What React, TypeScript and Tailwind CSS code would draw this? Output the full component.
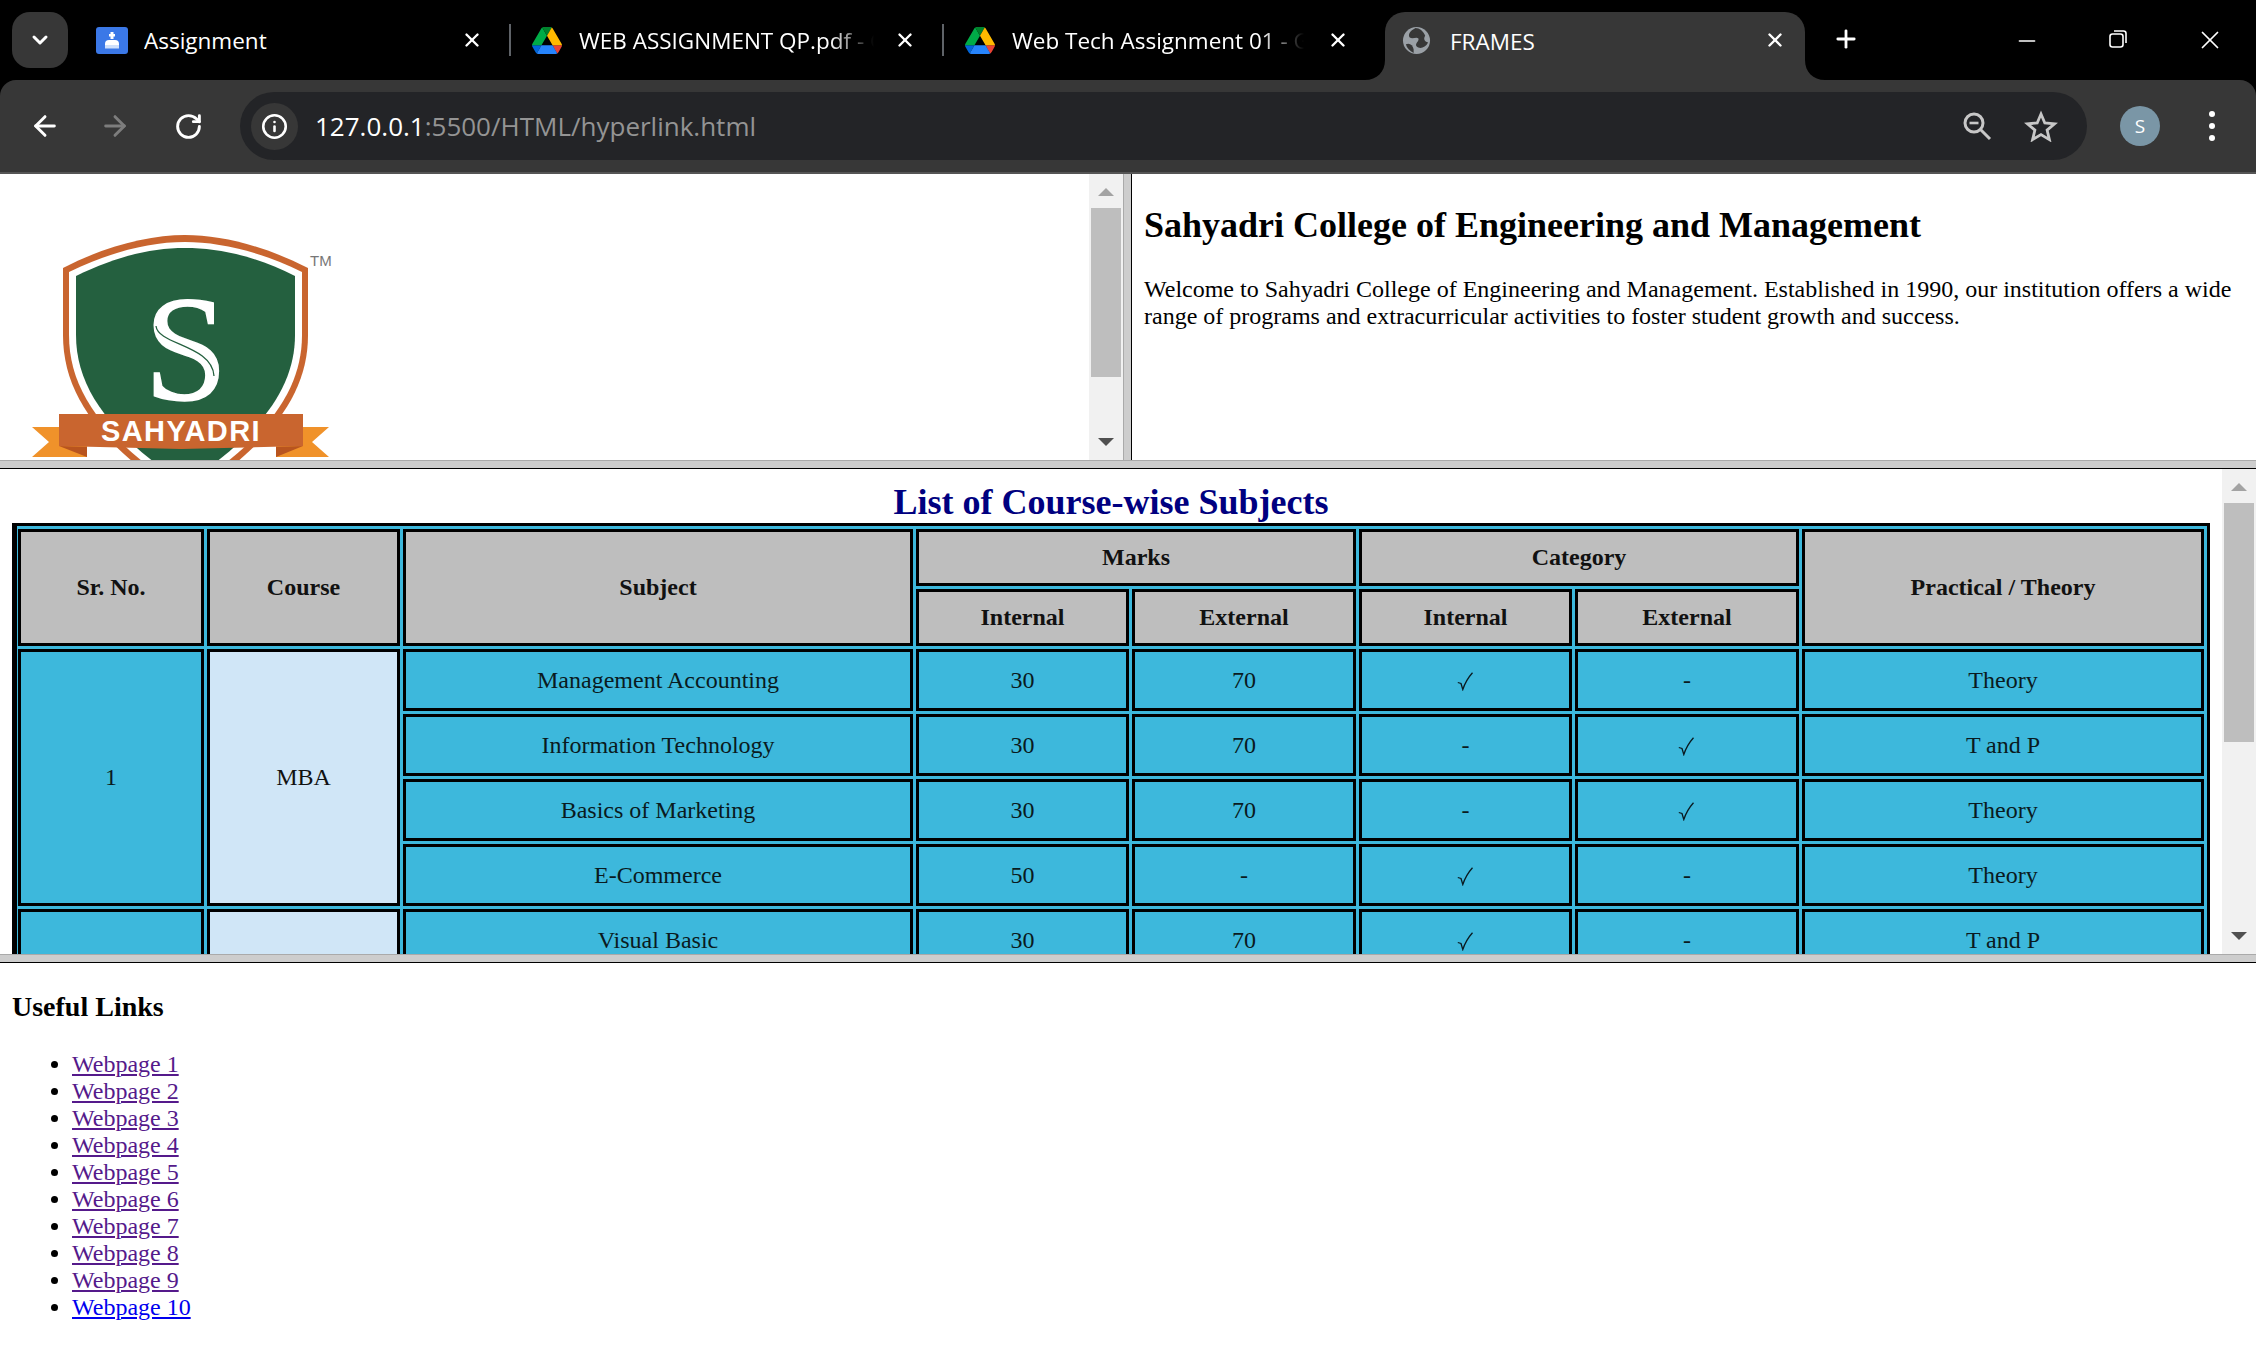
import React from "react";
import { ArrowLeft, ArrowRight, RotateCw, Info, X, Plus, Minus, ChevronDown } from "lucide-react";

function Drive() {
  return (
    <svg viewBox="0 0 87.3 78" className="w-[30px] h-[27px] shrink-0">
      <path d="m6.6 66.85 3.85 6.65c.8 1.4 1.95 2.5 3.3 3.3l13.75-23.8h-27.5c0 1.55.4 3.1 1.2 4.5z" fill="#0066da" />
      <path d="m43.65 25-13.75-23.8c-1.35.8-2.5 1.9-3.3 3.3l-25.4 44a9.06 9.06 0 0 0 -1.2 4.5h27.5z" fill="#00ac47" />
      <path d="m73.55 76.8c1.35-.8 2.5-1.9 3.3-3.3l1.6-2.75 7.65-13.25c.8-1.4 1.2-2.95 1.2-4.5h-27.502l5.852 11.5z" fill="#ea4335" />
      <path d="m43.65 25 13.75-23.8c-1.35-.8-2.9-1.2-4.5-1.2h-18.5c-1.6 0-3.15.45-4.5 1.2z" fill="#00832d" />
      <path d="m59.8 53h-32.3l-13.75 23.8c1.35.8 2.9 1.2 4.5 1.2h50.8c1.6 0 3.15-.45 4.5-1.2z" fill="#2684fc" />
      <path d="m73.4 26.5-12.7-22c-.8-1.4-1.95-2.5-3.3-3.3l-13.75 23.8 16.15 28h27.45c0-1.55-.4-3.1-1.2-4.5z" fill="#ffba00" />
    </svg>
  );
}

function AssignmentIcon() {
  return (
    <svg viewBox="0 0 32 27" className="w-[32px] h-[27px] shrink-0">
      <rect width="32" height="27" rx="3" fill="#3b78e7" />
      <rect x="14.5" y="5" width="3" height="7" fill="#fff" />
      <rect x="13" y="7" width="6" height="2.5" fill="#fff" />
      <path d="M9 17 Q9 13 13 13 H19 Q23 13 23 17 V21 H9Z" fill="#fff" />
      <rect x="9" y="18" width="14" height="3.5" fill="#cfe0fb" />
    </svg>
  );
}

function GlobeIcon() {
  return (
    <svg viewBox="0 0 30 30" className="w-[29px] h-[29px] shrink-0">
      <circle cx="15" cy="15" r="14" fill="#9aa0a6" />
      <path d="M14 2 C8 5 6 9 8 12 C11 14 15 11 17 13 C18 16 13 18 15 21 C18 24 24 23 27 17 C23 16 22 13 24 10 C22 5 18 2 14 2Z" fill="#373737" />
      <path d="M4 19 C8 17 11 20 12 24 C12 26 12 27 12 28 C8 26 5 23 4 19Z" fill="#373737" />
    </svg>
  );
}

function TabClose() {
  return (
    <div className="w-[30px] h-[28px] flex justify-center items-center shrink-0">
      <X size={22} strokeWidth={2.6} color="#fff" />
    </div>
  );
}

function Separator() {
  return <div className="w-[2px] h-[32px] bg-[#5f6368] shrink-0" />;
}

const tabText = "overflow-hidden whitespace-nowrap text-[22.5px] leading-[30px] text-white mt-[2px]";
const fadeText = "[mask-image:linear-gradient(to_right,#000_85%,transparent_100%)]";

function TabBar() {
  return (
    <div className="h-[80px] bg-black flex items-start pt-[12px] pl-[12px] font-['Open_Sans',sans-serif]">
      <div className="w-[56px] h-[56px] rounded-[18px] bg-[#373737] flex items-center justify-center shrink-0">
        <ChevronDown size={24} strokeWidth={3} color="#fff" />
      </div>
      <div className="h-[56px] w-[443px] pl-[28px] flex items-center shrink-0">
        <AssignmentIcon />
        <div className={tabText + " w-[313px] ml-[16px]"}>Assignment</div>
        <TabClose />
        <div className="w-[22px] shrink-0" />
        <Separator />
      </div>
      <div className="h-[56px] w-[433px] pl-[21px] flex items-center shrink-0">
        <Drive />
        <div className={tabText + " w-[295px] ml-[17px] " + fadeText}>WEB ASSIGNMENT QP.pdf - Google Drive</div>
        <div className="w-[16px] shrink-0" />
        <TabClose />
        <div className="w-[22px] shrink-0" />
        <Separator />
      </div>
      <div className="h-[56px] w-[441px] pl-[21px] flex items-center shrink-0">
        <Drive />
        <div className={tabText + " w-[292px] ml-[17px] " + fadeText}>Web Tech Assignment 01 - Google Drive</div>
        <div className="w-[19px] shrink-0" />
        <TabClose />
      </div>
      <div className="relative w-[420px] h-[68px] bg-[#373737] rounded-t-[20px] flex items-start pt-[14px] pl-[17px] shrink-0">
        <svg viewBox="0 0 20 20" className="absolute left-[-20px] bottom-0 w-[20px] h-[20px]"><path d="M20 0V20H0C12 20 20 12 20 0Z" fill="#373737" /></svg>
        <svg viewBox="0 0 20 20" className="absolute right-[-20px] bottom-0 w-[20px] h-[20px]"><path d="M0 0V20H20C8 20 0 12 0 0Z" fill="#373737" /></svg>
        <GlobeIcon />
        <div className="ml-[19px] w-[310px] text-[22.5px] text-white leading-[30px] mt-[1px]">FRAMES</div>
        <TabClose />
      </div>
      <div className="ml-[26px] mt-[13px] w-[30px] flex justify-center"><Plus size={28} strokeWidth={2.4} color="#fff" /></div>
      <div className="ml-[151px] mt-[16px] w-[30px] flex justify-center"><Minus size={26} strokeWidth={1.5} color="#fff" /></div>
      <div className="ml-[61px] mt-[16px] w-[30px] flex justify-center">
        <svg viewBox="0 0 22 22" className="w-[22px] h-[22px]" fill="none" stroke="#fff" strokeWidth="1.6">
          <rect x="3" y="6" width="13" height="13" rx="2.5" />
          <path d="M7 3H16.5Q19 3 19 5.5V15" />
        </svg>
      </div>
      <div className="ml-[62px] mt-[12px] w-[30px] flex justify-center"><X size={32} strokeWidth={1.4} color="#fff" /></div>
    </div>
  );
}

function ZoomGlyph() {
  return (
    <svg viewBox="0 0 30 30" className="w-[30px] h-[30px]" fill="none" stroke="#c7c7c7" strokeWidth="3">
      <circle cx="12" cy="12" r="9" />
      <path d="M18.5 18.5 L28 28" />
      <path d="M7.5 12 H16.5" strokeWidth="2.6" />
    </svg>
  );
}

function StarGlyph() {
  return (
    <svg viewBox="0 0 34 32" className="w-[34px] h-[32px]" fill="none" stroke="#c7c7c7" strokeWidth="2.8" strokeLinejoin="miter">
      <path d="M17 4 L20.8 13 L30.5 13.8 L23.1 20.1 L25.4 29.6 L17 24.6 L8.6 29.6 L10.9 20.1 L3.5 13.8 L13.2 13Z" />
    </svg>
  );
}

function Toolbar() {
  return (
    <div className="h-[92px] bg-[#373737] rounded-t-[16px] flex items-center font-['Open_Sans',sans-serif]">
      <div className="ml-[29px] w-[32px] flex justify-center"><ArrowLeft size={32} strokeWidth={2.2} color="#fff" /></div>
      <div className="ml-[38px] w-[32px] flex justify-center"><ArrowRight size={32} strokeWidth={2.2} color="#7d7d7d" /></div>
      <div className="ml-[41px] w-[32px] flex justify-center"><RotateCw size={29} strokeWidth={2.4} color="#fff" /></div>
      <div className="ml-[36px] w-[1847px] shrink-0 h-[68px] bg-[#232427] rounded-full flex items-center pl-[11px]">
        <div className="w-[47px] h-[47px] rounded-full bg-[#373737] flex items-center justify-center"><Info size={27} strokeWidth={2.3} color="#fff" /></div>
        <div className="ml-[17px] text-[26px] whitespace-nowrap text-white">127.0.0.1<span className="text-[#949494]">:5500/HTML/hyperlink.html</span></div>
        <div className="ml-auto flex items-center pr-[29px]">
          <ZoomGlyph />
          <div className="ml-[32px]"><StarGlyph /></div>
        </div>
      </div>
      <div className="ml-[33px] w-[40px] h-[40px] rounded-full bg-[#7a96a6] text-white text-[19px] flex items-center justify-center">S</div>
      <div className="ml-[37px] w-[30px] flex flex-col items-center gap-[6px]">
        <div className="w-[6px] h-[6px] rounded-full bg-white" />
        <div className="w-[6px] h-[6px] rounded-full bg-white" />
        <div className="w-[6px] h-[6px] rounded-full bg-white" />
      </div>
    </div>
  );
}

function Scrollbar({ thumb }: { thumb: string }) {
  return (
    <div className="w-[34px] shrink-0 h-full bg-[#f1f1f1] flex flex-col items-center">
      <div className="mt-[14px] w-0 h-0 border-x-[8px] border-x-transparent border-b-[8px] border-b-[#a3a3a3]" />
      <div className={"mt-[12px] w-[30px] bg-[#bebebe] " + thumb} />
      <div className="mt-auto mb-[14px] w-0 h-0 border-x-[8px] border-x-transparent border-t-[8px] border-t-[#505050]" />
    </div>
  );
}

function Logo() {
  const shield = "M63 268 C105 246 150 235 185 235 C222 235 265 246 308 268 L308 335 C308 395 270 445 185 500 C100 445 63 395 63 335Z";
  return (
    <svg viewBox="0 174 350 286" className="w-[350px] h-[286px] shrink-0">
      <path d={shield} fill="#c9652f" />
      <path d="M69 272 C110 252 150 242 185 242 C220 242 262 252 302 272 L302 335 C302 392 265 440 185 492 C105 440 69 392 69 335Z" fill="#fff" />
      <path d="M76 276 C115 257 150 248 185 248 C220 248 258 257 295 276 L295 335 C295 388 260 435 185 484 C110 435 76 388 76 335Z" fill="#24603f" />
      <text x="186" y="400" textAnchor="middle" fill="#fff" stroke="#fff" strokeWidth="1.5" fontSize="150" fontFamily="Liberation Serif, serif">S</text>
      <path d="M156 326 C158 345 212 345 214 376" fill="none" stroke="#24603f" strokeWidth="1.3" />
      <path d="M32 427 H87 V457 H32 L49 442Z" fill="#f0922a" />
      <path d="M329 427 H276 V457 H329 L312 442Z" fill="#f0922a" />
      <path d="M59 414 H303 V446 L181 449 L59 446Z" fill="#c9652f" />
      <path d="M59 446 L87 457 V447Z" fill="#b8541f" />
      <path d="M303 446 L276 457 V447Z" fill="#b8541f" />
      <text x="181" y="441" textAnchor="middle" fill="#fff" fontSize="29" fontWeight="700" fontFamily="Liberation Sans, sans-serif" letterSpacing="1.4">SAHYADRI</text>
      <text x="310" y="266" fill="#777" fontSize="15" fontFamily="Liberation Sans, sans-serif">TM</text>
    </svg>
  );
}

const thClass = "border-[3px] border-black bg-[#bebebe] font-bold text-[#111] text-center align-middle p-0";
const tdClass = "border-[3px] border-black bg-[#3db8dc] text-[#0a1a20] text-center align-middle p-0";
const courseClass = "border-[3px] border-black bg-[#d0e6f7] text-[#111] text-center align-middle p-0";

const rows = [
  ["Management Accounting", "30", "70", "✓", "-", "Theory"],
  ["Information Technology", "30", "70", "-", "✓", "T and P"],
  ["Basics of Marketing", "30", "70", "-", "✓", "Theory"],
  ["E-Commerce", "50", "-", "✓", "-", "Theory"],
  ["Visual Basic", "30", "70", "✓", "-", "T and P"],
];

function Mark({ v }: { v: string }) {
  if (v === "✓") {
    return (
      <span role="img" aria-label="✓" className="inline-block align-middle mr-[2px]">
        <svg viewBox="0 0 16 19" className="w-[16px] h-[19px]" fill="none" stroke="#0a1a20">
          <path d="M0.8 10.5 L4 11.5 L5.8 17.5 Q9 8 15.5 0.8" strokeWidth="1.3" />
        </svg>
      </span>
    );
  }
  return <>{v}</>;
}

function CourseTable() {
  return (
    <table className="w-[2198px] table-fixed border-separate border-spacing-[3px] border-[3px] border-black bg-[#3db8dc] shadow-[inset_2px_0_0_#000] text-[24px] leading-[27px]">
      <colgroup>
        <col className="w-[186px]" />
        <col className="w-[193px]" />
        <col className="w-[510px]" />
        <col className="w-[213px]" />
        <col className="w-[224px]" />
        <col className="w-[213px]" />
        <col className="w-[224px]" />
        <col className="w-[402px]" />
      </colgroup>
      <thead>
        <tr className="h-[57px]">
          <th rowSpan={2} className={thClass}>Sr. No.</th>
          <th rowSpan={2} className={thClass}>Course</th>
          <th rowSpan={2} className={thClass}>Subject</th>
          <th colSpan={2} className={thClass}>Marks</th>
          <th colSpan={2} className={thClass}>Category</th>
          <th rowSpan={2} className={thClass}>Practical / Theory</th>
        </tr>
        <tr className="h-[57px]">
          <th className={thClass}>Internal</th>
          <th className={thClass}>External</th>
          <th className={thClass}>Internal</th>
          <th className={thClass}>External</th>
        </tr>
      </thead>
      <tbody>
        {rows.map((r, i) => (
          <tr key={r[0]} className="h-[62px]">
            {i === 0 && <td rowSpan={4} className={tdClass}>1</td>}
            {i === 0 && <td rowSpan={4} className={courseClass}>MBA</td>}
            {i === 4 && <td className={tdClass}></td>}
            {i === 4 && <td className={courseClass}></td>}
            {r.map((c, j) => (
              <td key={j} className={tdClass}><Mark v={c} /></td>
            ))}
          </tr>
        ))}
      </tbody>
    </table>
  );
}

const links = ["Webpage 1", "Webpage 2", "Webpage 3", "Webpage 4", "Webpage 5", "Webpage 6", "Webpage 7", "Webpage 8", "Webpage 9", "Webpage 10"];

export default function App() {
  return (
    <div className="w-[2256px] h-[1364px] overflow-hidden flex flex-col bg-black font-['Liberation_Serif',serif] text-black">
      <TabBar />
      <Toolbar />
      <div className="h-[2px] bg-[#555] shrink-0" />

      {/* top frames */}
      <div className="h-[286px] flex bg-white shrink-0">
        <div className="w-[1123px] flex shrink-0">
          <div className="grow"><Logo /></div>
          <Scrollbar thumb="h-[169px]" />
        </div>
        <div className="w-[8px] bg-[#cdcdcd] border-l border-l-[#aaa] shrink-0" />
        <div className="w-[1px] bg-black shrink-0" />
        <div className="grow px-[12px] pt-[31px]">
          <h2 className="text-[36px] leading-[41px] font-bold">Sahyadri College of Engineering and Management</h2>
          <p className="mt-[30px] text-[24px] leading-[27px] w-[1100px]">
            Welcome to Sahyadri College of Engineering and Management. Established in 1990, our institution offers a wide range of programs and extracurricular activities to foster student growth and success.
          </p>
        </div>
      </div>

      <div className="h-[9px] bg-[#cdcdcd] border-t border-t-[#aaa] border-b border-b-black shrink-0" />

      {/* middle frame */}
      <div className="h-[485px] flex bg-white overflow-hidden shrink-0">
        <div className="w-[2222px] pl-[12px] pt-[13px] overflow-hidden">
          <h2 className="w-[2198px] text-center text-[36px] leading-[41px] font-bold text-[#000080]">List of Course-wise Subjects</h2>
          <CourseTable />
        </div>
        <Scrollbar thumb="h-[239px]" />
      </div>

      <div className="h-[9px] bg-[#cdcdcd] border-t border-t-[#aaa] border-b border-b-black shrink-0" />

      {/* bottom frame */}
      <div className="grow bg-white pl-[12px] pt-[28px]">
        <h3 className="text-[28px] leading-[32px] font-bold">Useful Links</h3>
        <ul className="mt-[28px] list-disc pl-[60px] text-[24px] leading-[27px]">
          {links.map((l, i) => (
            <li key={l}>
              <a href="#" className={i === 9 ? "underline text-[#0000ee]" : "underline text-[#551a8b]"}>{l}</a>
            </li>
          ))}
        </ul>
      </div>
    </div>
  );
}
